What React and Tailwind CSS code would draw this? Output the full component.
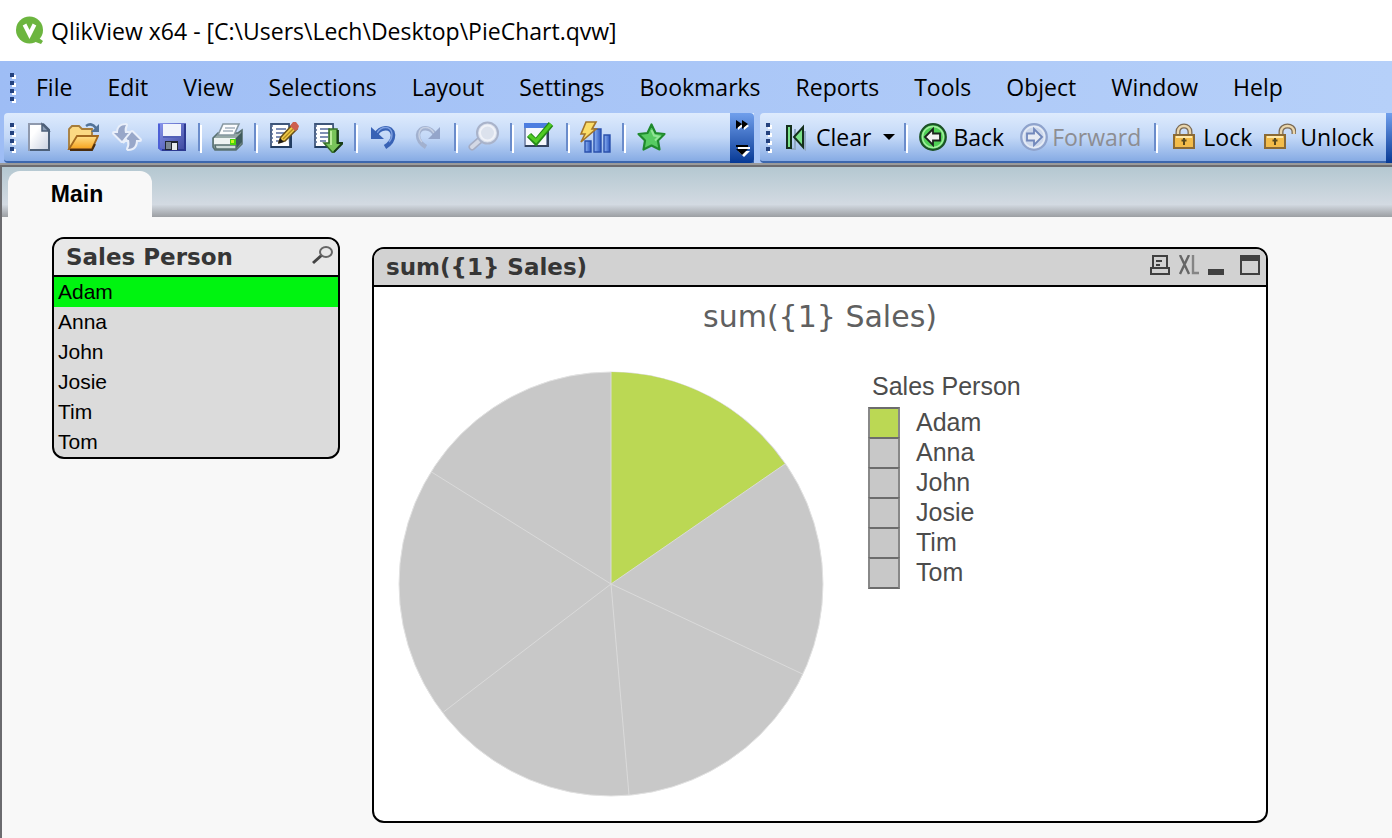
const MENUS = [
  "File",
  "Edit",
  "View",
  "Selections",
  "Layout",
  "Settings",
  "Bookmarks",
  "Reports",
  "Tools",
  "Object",
  "Window",
  "Help",
];

const PERSONS = ["Adam", "Anna", "John", "Josie", "Tim", "Tom"];

const UI_FONT = "font-['Open_Sans','Noto_Sans',sans-serif]";
const CAPTION_FONT = "font-['DejaVu_Sans',sans-serif]";
const SHEET_FONT = "font-['Liberation_Sans',sans-serif]";

function Icon({ children, className = "size-8" }) {
  return (
    <svg viewBox="0 0 32 32" className={className} aria-hidden="true">
      {children}
    </svg>
  );
}

function LogoIcon() {
  return (
    <svg viewBox="0 0 30 30" className="size-[30px]" aria-hidden="true">
      <path d="M21 20l7 5-2 3-8-3z" fill="#6cb53f" />
      <circle cx="14.5" cy="14" r="13.5" fill="#6cb53f" />
      <path
        d="M9.5 8.5l5 10 5-10"
        fill="none"
        stroke="#fff"
        strokeWidth="4"
      />
    </svg>
  );
}

function NewIcon() {
  return (
    <Icon>
      <defs>
        <linearGradient id="paper" x1="0" y1="0" x2="1" y2="1">
          <stop offset="0.3" stopColor="#fff" />
          <stop offset="1" stopColor="#c8d0e0" />
        </linearGradient>
      </defs>
      <path d="M6 3h14l6 6v20H6z" fill="url(#paper)" stroke="#8f99ad" strokeWidth="2" />
      <path d="M20 3l6 6v20H7" fill="none" stroke="#4d6079" strokeWidth="2" />
      <path d="M19 3v7h7z" fill="#8c9db5" stroke="#4d6079" strokeWidth="1.5" />
    </Icon>
  );
}

function OpenIcon() {
  return (
    <Icon>
      <defs>
        <linearGradient id="folder" x1="0" y1="0" x2="0" y2="1">
          <stop offset="0" stopColor="#ffe08a" />
          <stop offset="1" stopColor="#f6a21c" />
        </linearGradient>
      </defs>
      <path d="M2 28V8l3-3h7l3 3h10v8" fill="#fbd983" stroke="#a67c3a" strokeWidth="1.8" />
      <path d="M2 28l8-13h21l-6 13z" fill="url(#folder)" stroke="#a3691f" strokeWidth="1.8" />
      <path d="M3 29h22l3-6" fill="none" stroke="#4a2c0c" strokeWidth="2" />
      <path d="M19 5c4-3 7-2 10 2" fill="none" stroke="#527399" strokeWidth="2.4" />
      <path d="M32 3v8h-8z" fill="#527399" />
    </Icon>
  );
}

function ReloadIcon() {
  return (
    <Icon>
      <g stroke="#e9effa" strokeWidth="4" strokeLinejoin="round" fill="#e9effa">
        <path d="M15 4C9 4 7 7 7 12H3l8 8 7-8h-4c-1-4 0-6 1-8z" />
        <path d="M17 28c6 0 8-4 8-9h4l-8-8-7 8h4c1 5 0 7-1 9z" />
      </g>
      <path d="M15 4C9 4 7 7 7 12H3l8 8 7-8h-4c-1-4 0-6 1-8z" fill="#98a7c9" />
      <path d="M17 28c6 0 8-4 8-9h4l-8-8-7 8h4c1 5 0 7-1 9z" fill="#98a7c9" />
      <path d="M14 18l4-5M12 22l4-4" stroke="#e9effa" strokeWidth="2" />
    </Icon>
  );
}

function SaveIcon() {
  return (
    <Icon>
      <defs>
        <linearGradient id="disk" x1="0" y1="0" x2="1" y2="1">
          <stop offset="0" stopColor="#8a97ee" />
          <stop offset="1" stopColor="#3c479c" />
        </linearGradient>
      </defs>
      <path d="M3 2h28v28H6l-3-3z" fill="url(#disk)" />
      <path d="M4 3v24l3 2" fill="none" stroke="#4c5fd6" strokeWidth="2" />
      <path d="M30 3v26H7" fill="none" stroke="#2c3990" strokeWidth="2" />
      <path d="M8 3h18v13H8z" fill="#f1f4fb" />
      <path d="M8 16h18" stroke="#5260b6" strokeWidth="2" />
      <path d="M10 20h13v9H10z" fill="#20262f" />
      <path d="M17 22h5v7h-5z" fill="#e7ecec" />
      <path d="M11 21h5v7h-5z" fill="#7b8693" />
    </Icon>
  );
}

function PrintIcon() {
  return (
    <Icon>
      <path d="M2 17l5-5h20l4-3v14l-6 6H4l-2-3z" fill="#96a9a7" stroke="#587070" strokeWidth="1.6" />
      <path d="M12 3h16l-5 11H7z" fill="#fbfcfd" stroke="#8798a1" strokeWidth="1.6" />
      <path d="M14 7h10M12 10h10" stroke="#a5b1bd" strokeWidth="1.4" />
      <path d="M3 17h21v7H3z" fill="#eef3f2" />
      <path d="M25 17l6-6v10l-6 7z" fill="#3f5b5c" />
      <path d="M4 24h21v4H5z" fill="#cfdcda" stroke="#587070" strokeWidth="1.4" />
      <path d="M19 18h6v6h-6z" fill="#4bd40c" />
      <path d="M20 19h3v3h-3z" fill="#c9f51e" />
    </Icon>
  );
}

function NotesPage() {
  return (
    <>
      <path d="M4 3h18l1 23H4z" fill="#fff" stroke="#3e567a" strokeWidth="1.8" />
      <path d="M4 26h20V8" fill="none" stroke="#223d61" strokeWidth="2" />
      <path d="M9 8h10M9 12h10M9 16h8M9 20h6" stroke="#8090b4" strokeWidth="1.8" />
      <path d="M3 5h3M3 9h3M3 13h3M3 17h3M3 21h3" stroke="#536a93" strokeWidth="1.5" />
    </>
  );
}

function EditIcon() {
  return (
    <Icon>
      <NotesPage />
      <path d="M12 21l2-5L25 4l5 4-12 12z" fill="#f2cd49" stroke="#6b5118" strokeWidth="1.5" />
      <path d="M23 5l3-4h3l3 4-1 3-3 2z" fill="#cd5e4e" />
      <path d="M11 23l2-6 4 4z" fill="#1c1a16" />
      <path d="M16 18L26 8" stroke="#b38b20" strokeWidth="1.4" />
    </Icon>
  );
}

function ExportIcon() {
  return (
    <Icon>
      <NotesPage />
      <path d="M18 8h8v14h5l-9 10-9-10h5z" fill="#78c45a" stroke="#366f2a" strokeWidth="1.6" />
      <path d="M20 10v14" stroke="#b9eb9a" strokeWidth="2" />
      <path d="M27 9v13h5l-9 9" fill="none" stroke="#173d16" strokeWidth="1.8" />
    </Icon>
  );
}

function UndoIcon() {
  return (
    <Icon>
      <path
        d="M9 14c3-8 16-10 17 0 0 6-3 9-8 12"
        fill="none"
        stroke="#3862b5"
        strokeWidth="4.6"
      />
      <path d="M10 12c4-7 14-8 15 1 0 4-1 6-3 8" fill="none" stroke="#7d9fe0" strokeWidth="1.4" />
      <path d="M4 6v12h13z" fill="#3862b5" />
    </Icon>
  );
}

function RedoIcon() {
  return (
    <Icon>
      <path
        d="M24 14C21 6 8 4 7 14c0 6 3 9 8 12"
        fill="none"
        stroke="#a2b1cf"
        strokeWidth="4.4"
      />
      <path d="M23 12C19 5 9 4 8 13c0 4 1 6 3 8" fill="none" stroke="#c6d0e3" strokeWidth="1.4" />
      <path d="M29 6v12H17z" fill="#94a5ca" />
    </Icon>
  );
}

function SearchIcon() {
  return (
    <Icon>
      <path d="M5 26l8-7" stroke="#a5adc4" strokeWidth="7" strokeLinecap="round" />
      <path d="M5 26l8-7" stroke="#d3d8e5" strokeWidth="4" strokeLinecap="round" />
      <circle cx="20.500" cy="12" r="10.5" fill="#d9dfeb" stroke="#a9b3ca" strokeWidth="2" />
      <circle cx="20.500" cy="12" r="7.5" fill="#dce2ed" stroke="#f0f2f8" strokeWidth="2" />
    </Icon>
  );
}

function SelectIcon() {
  return (
    <Icon>
      <path d="M2 3h22v22H2z" fill="#f6f8fd" stroke="#7989ad" strokeWidth="1.8" />
      <path d="M1 2h24v5H1z" fill="#4c7de0" />
      <path d="M2 25h23V8" fill="none" stroke="#33435f" strokeWidth="2" />
      <path d="M6 14l7 7L28 3" fill="none" stroke="#258a17" strokeWidth="6" />
      <path d="M6 14l7 6L28 3" fill="none" stroke="#4fcb24" strokeWidth="3.4" />
    </Icon>
  );
}

function ChartIcon() {
  return (
    <Icon>
      <defs>
        <linearGradient id="bar" x1="0" y1="0" x2="1" y2="0">
          <stop offset="0" stopColor="#8eb4f5" />
          <stop offset="1" stopColor="#2a55bd" />
        </linearGradient>
      </defs>
      <g fill="url(#bar)" stroke="#2a50ac" strokeWidth="1.4">
        <path d="M6 20h6v11H6z" />
        <path d="M15 8h7v23h-7z" />
        <path d="M25 14h6v17h-6z" />
      </g>
      <path
        d="M7 1h10l-4 7h4L2 21l4-8H2z"
        fill="#fbdd68"
        stroke="#a3752a"
        strokeWidth="1.6"
      />
    </Icon>
  );
}

function StarIcon() {
  return (
    <Icon>
      <path
        d="M16.500 3.500l4 8.500 9 1-6.500 6.500 1.500 9-8-4-8 4 1.500-9L3.500 13l9-1z"
        fill="#57cb62"
        stroke="#1f8a2d"
        strokeWidth="2.2"
        strokeLinejoin="round"
      />
      <path d="M16.500 9l2.500 5.500 5 1-4 4" fill="none" stroke="#92e597" strokeWidth="2" />
    </Icon>
  );
}

function ClearIcon() {
  return (
    <svg viewBox="0 0 20 28" className="h-7 w-5" aria-hidden="true">
      <path d="M5 26h4V6M19 8v18l-5-5" fill="none" stroke="#91a9c6" strokeWidth="2" />
      <path d="M1 3h4v22H1z" fill="#7be28a" stroke="#15301d" strokeWidth="2" />
      <path d="M17 4v20L8 14z" fill="#7be28a" stroke="#15301d" strokeWidth="2" />
    </svg>
  );
}

function ArrowBall({ forward }) {
  const rim = forward ? "#8fa3cc" : "#1c5227";
  const fill = forward ? "#cdd8ec" : "#4fd055";
  return (
    <svg viewBox="0 0 28 28" className="size-7" aria-hidden="true">
      <circle cx="14" cy="14" r="12.800" fill={fill} stroke={rim} strokeWidth="2.2" />
      <circle cx="14" cy="14" r="10.500" fill="none" stroke={forward ? "#e6ecf6" : "#a4eea0"} strokeWidth="1.4" />
      <path
        d={forward ? "M22 14l-8-8v4.500H7v7h7V22z" : "M6 14l8-8v4.500h7v7h-7V22z"}
        fill={forward ? "#e8ecf4" : "#f2f2f2"}
        stroke={forward ? "#7288bb" : "#1b241c"}
        strokeWidth="1.800"
      />
    </svg>
  );
}

function LockIcon({ open }) {
  const shackle = open ? "M17 13V9c0-8 13-8 13 0v2" : "M5 13V9c0-8 12-8 12 0v4";
  return (
    <svg
      viewBox={open ? "0 0 32 28" : "0 0 22 28"}
      className={open ? "h-7 w-8" : "h-7 w-[22px]"}
      aria-hidden="true"
    >
      <path d={shackle} fill="none" stroke="#7b6a54" strokeWidth="5" />
      <path d={shackle} fill="none" stroke="#ead6ac" strokeWidth="2.400" />
      <path d="M1 12h20v13H1z" fill="#f3bc4a" stroke="#8b6a35" strokeWidth="2" />
      <path d="M3 14h16" stroke="#ffe9a9" strokeWidth="2" />
      <path d="M11 15v7M8.500 17.500h5" stroke="#5a4a1e" strokeWidth="2" />
    </svg>
  );
}

function Grip() {
  return (
    <div className="flex w-1 shrink-0 flex-col gap-1" aria-hidden="true">
      <span className="size-1 bg-[#24427e] shadow-[2px_2px_0_white]" />
      <span className="size-1 bg-[#24427e] shadow-[2px_2px_0_white]" />
      <span className="size-1 bg-[#24427e] shadow-[2px_2px_0_white]" />
      <span className="size-1 bg-[#24427e] shadow-[2px_2px_0_white]" />
    </div>
  );
}

function Separator() {
  return (
    <div className="flex w-3 shrink-0 justify-center" aria-hidden="true">
      <span className="h-7 w-[2px] bg-[#6a8ccb] shadow-[2px_2px_0_white]" />
    </div>
  );
}

function ToolButton({ label, children }) {
  return (
    <button
      aria-label={label}
      className="flex h-12 w-11 shrink-0 items-center justify-center"
    >
      {children}
    </button>
  );
}

function MenuBar() {
  return (
    <nav className="flex h-[52px] items-center pl-[10px]">
      <Grip />
      <div className="flex gap-[35px] pl-[22px] text-[23px] leading-8 text-black">
        {MENUS.map((menu) => (
          <button key={menu}>{menu}</button>
        ))}
      </div>
    </nav>
  );
}

function ToolBars() {
  const barStyle =
    "flex h-[50px] items-center border-b-2 border-[#3c67ad] bg-linear-to-b from-[#deebfd] via-[#c3d8f7] to-[#86abe4] ";

  return (
    <div className="flex gap-[6px] overflow-hidden pl-1">
      <div className={barStyle + "shrink-0 rounded-l pl-[6px]"}>
        <Grip />
        <div className="flex items-center pr-[57px] pl-[3px]">
          <ToolButton label="New"><NewIcon /></ToolButton>
          <ToolButton label="Open"><OpenIcon /></ToolButton>
          <ToolButton label="Reload"><ReloadIcon /></ToolButton>
          <ToolButton label="Save"><SaveIcon /></ToolButton>
          <Separator />
          <ToolButton label="Print"><PrintIcon /></ToolButton>
          <Separator />
          <ToolButton label="Edit script"><EditIcon /></ToolButton>
          <ToolButton label="Export"><ExportIcon /></ToolButton>
          <Separator />
          <ToolButton label="Undo"><UndoIcon /></ToolButton>
          <ToolButton label="Redo"><RedoIcon /></ToolButton>
          <Separator />
          <ToolButton label="Search"><SearchIcon /></ToolButton>
          <Separator />
          <ToolButton label="Current selections"><SelectIcon /></ToolButton>
          <Separator />
          <ToolButton label="Quick chart"><ChartIcon /></ToolButton>
          <Separator />
          <ToolButton label="Add bookmark"><StarIcon /></ToolButton>
        </div>
        <button
          aria-label="More buttons"
          className="h-[50px] w-6 shrink-0 self-start rounded-r bg-linear-to-b from-[#709fec] to-[#053995]"
        >
          <svg viewBox="0 0 24 50" className="h-[50px] w-6" aria-hidden="true">
            <path d="M8 9l5 4-5 4zM14 9l5 4-5 4z" fill="#fff" />
            <path d="M6 7l6 4-6 5zM12 7l6 4-6 5z" fill="#000" />
            <path d="M8 34h12v2H8zM8 38h12l-6 6z" fill="#fff" />
            <path d="M6 32h12v2H6zM6 36h12l-6 6z" fill="#000" />
          </svg>
        </button>
      </div>

      <div className={barStyle + "min-w-0 flex-1 rounded-l pl-[6px] text-[23px] leading-8"}>
        <Grip />
        <button className="ml-4 flex shrink-0 items-center gap-[10px]">
          <ClearIcon />
          Clear
        </button>
        <button aria-label="Clear options" className="ml-3 shrink-0">
          <svg viewBox="0 0 12 6" className="h-[6px] w-3" aria-hidden="true">
            <path d="M0 0h12L6 6z" fill="#000" />
          </svg>
        </button>
        <div className="ml-1 flex shrink-0"><Separator /></div>
        <button className="ml-2 flex shrink-0 items-center gap-[6px]">
          <ArrowBall />
          Back
        </button>
        <button
          disabled
          className="ml-4 flex shrink-0 items-center gap-1 text-[#8d8d92]"
        >
          <ArrowBall forward />
          Forward
        </button>
        <div className="ml-2 flex shrink-0"><Separator /></div>
        <button className="ml-3 flex shrink-0 items-center gap-2">
          <LockIcon />
          Lock
        </button>
        <button className="ml-3 flex shrink-0 items-center gap-1">
          <LockIcon open />
          Unlock
        </button>
        <button
          aria-label="More navigation buttons"
          className="ml-auto h-[50px] w-[6px] shrink-0 self-start bg-linear-to-b from-[#709fec] to-[#053995]"
        />
      </div>
    </div>
  );
}

function ListBox() {
  return (
    <section className="mt-5 w-72 shrink-0 overflow-hidden rounded-xl border-2 border-black bg-[#dbdbdb]">
      <header className="flex h-[38px] items-center justify-between border-b-2 border-black bg-[#e8e8e8] pr-1 pl-3">
        <h2 className={"text-[23px] font-bold text-[#363636] " + CAPTION_FONT}>
          Sales Person
        </h2>
        <button aria-label="Search Sales Person" className="pb-1">
          <svg viewBox="0 0 22 20" className="h-5 w-[22px]" aria-hidden="true">
            <path d="M1 18l9-8" stroke="#444" strokeWidth="3" />
            <ellipse cx="14" cy="7" rx="6" ry="5" fill="none" stroke="#666" strokeWidth="2" />
          </svg>
        </button>
      </header>
      <ul className="text-[21px] leading-[30px] text-black">
        {PERSONS.map((person) => (
          <li key={person}>
            <button
              className={
                person === "Adam"
                  ? "block w-full bg-[#00f410] pl-1 text-left"
                  : "block w-full pl-1 text-left"
              }
            >
              {person}
            </button>
          </li>
        ))}
      </ul>
    </section>
  );
}

function Pie() {
  return (
    <svg viewBox="0 0 426 426" className="size-[426px] shrink-0" role="img" aria-label="Sales by person">
      <circle cx="213" cy="213" r="212" fill="#c8c8c8" stroke="#e2e2e2" />
      <path d="M213 213V1A212 212 0 0 1 387 93z" fill="#bbd854" />
      <path
        d="M213 213V1M213 213L387 93M213 213l191.500 90M213 213l18 211M213 213L45.500 341M213 213L33.500 101"
        fill="none"
        stroke="#dadada"
      />
    </svg>
  );
}

function ChartPanel() {
  return (
    <section className="mt-[30px] mr-[124px] h-[576px] min-w-0 flex-1 overflow-hidden rounded-xl border-2 border-black bg-white">
      <header className="flex h-[38px] items-center border-b-2 border-black bg-[#d2d2d2] pr-[6px] pl-3">
        <h2 className={"flex-1 text-[23px] font-bold text-[#363636] " + CAPTION_FONT}>
          sum({"{1}"} Sales)
        </h2>
        <div className="flex items-center pb-1">
          <button aria-label="Print">
            <svg viewBox="0 0 20 20" className="size-5" aria-hidden="true">
              <path d="M3 13V1h14v12M1 13h18v6H1z" fill="none" stroke="#404040" strokeWidth="2" />
              <path d="M6 6h6M6 10h4" stroke="#404040" strokeWidth="2" />
            </svg>
          </button>
          <button aria-label="Send to Excel" className="ml-2">
            <svg viewBox="0 0 22 20" className="h-5 w-[22px]" aria-hidden="true">
              <path d="M2 0l9 19M11 0L2 19" fill="none" stroke="#666" strokeWidth="2.400" />
              <path d="M15 0v18h6" fill="none" stroke="#858585" strokeWidth="2.400" />
            </svg>
          </button>
          <button aria-label="Minimize" className="ml-2">
            <svg viewBox="0 0 16 20" className="h-5 w-4" aria-hidden="true">
              <path d="M0 14h16v6H0z" fill="#404040" />
            </svg>
          </button>
          <button aria-label="Maximize" className="ml-4">
            <svg viewBox="0 0 20 20" className="size-5" aria-hidden="true">
              <path d="M1 1h18v18H1z" fill="none" stroke="#404040" strokeWidth="2" />
              <path d="M0 0h20v6H0z" fill="#404040" />
            </svg>
          </button>
        </div>
      </header>

      <h3
        className={
          "pt-2 text-center text-[30px] leading-[44px] text-[#606060] " + CAPTION_FONT
        }
      >
        sum({"{1}"} Sales)
      </h3>
      <div className="flex items-start pt-8 pl-6">
        <Pie />
        <div className="ml-[44px] text-[25px] leading-[30px] text-[#4c4c4c]">
          <p className="pl-1">Sales Person</p>
          <ul className="mt-[6px]">
            {PERSONS.map((person) => (
              <li key={person} className="flex items-start">
                <span
                  className={
                    person === "Adam"
                      ? "-mb-[2px] h-8 w-8 shrink-0 border-2 border-x-[#888888] border-y-[#6c6c6c] bg-[#bbd854]"
                      : "-mb-[2px] h-8 w-8 shrink-0 border-2 border-x-[#888888] border-y-[#6c6c6c] bg-[#c8c8c8]"
                  }
                />
                <span className="pl-4">{person}</span>
              </li>
            ))}
          </ul>
        </div>
      </div>
    </section>
  );
}

export default function App() {
  return (
    <div className={"flex min-h-screen flex-col bg-[#f8f8f8] " + UI_FONT}>
      <header className="flex h-[61px] items-center gap-[6px] bg-white pl-[15px]">
        <LogoIcon />
        <h1 className="text-[23px] leading-8 text-black">
          QlikView x64 - [C:\Users\Lech\Desktop\PieChart.qvw]
        </h1>
      </header>

      <div className="bg-linear-to-r from-[#9ebdf5] to-[#b6d0f9]">
        <MenuBar />
        <ToolBars />
      </div>

      <div className="flex flex-1 flex-col border-t-2 border-[#9a9a9a]">
        <div className="flex flex-1 flex-col border-t-2 border-l-2 border-[#6b6b6f]">
          <div className="flex h-[50px] items-end bg-linear-to-b from-[#b4c8d1] via-[#d3dae2] via-75% to-[#9c9fa3] pl-[6px]">
            <button className="h-[46px] w-36 rounded-t-xl bg-[#f8f8f8] pr-1.5 font-['Liberation_Sans',sans-serif] text-[23px] font-bold text-black">
              Main
            </button>
          </div>
          <main className={"flex flex-1 items-start gap-8 pb-[15px] pl-[50px] " + SHEET_FONT}>
            <ListBox />
            <ChartPanel />
          </main>
        </div>
      </div>
    </div>
  );
}
